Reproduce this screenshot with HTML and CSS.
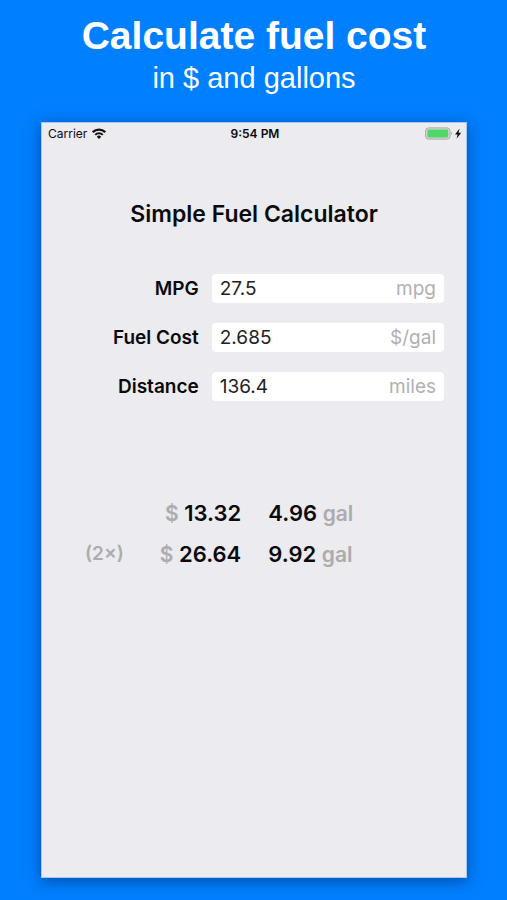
FILE: index.html
```
<!DOCTYPE html>
<html lang="en">
<head>
  <meta charset="UTF-8" />
  <meta name="viewport" content="width=device-width, initial-scale=1.0"/>
  <title>Simple Fuel Calculator</title>
  <link rel="stylesheet" href="styles.css">
</head>
<body>
  <header class="promo">
    <h1>Calculate fuel cost</h1>
    <p>in $ and gallons</p>
  </header>

  <main class="phone">
    <!-- Status bar -->
    <div class="status-bar">
      <div class="carrier">
        Carrier
        <svg class="wifi" viewBox="0 0 14 11" width="14" height="11" aria-hidden="true">
          <path d="M0.8 4.2a8.8 8.8 0 0 1 12.4 0" fill="none" stroke="#111" stroke-width="2.3"/>
          <path d="M3.2 6.9a5.4 5.4 0 0 1 7.6 0" fill="none" stroke="#111" stroke-width="2"/>
          <path d="M4.8 8.7a3.1 3.1 0 0 1 4.4 0L7 11z" fill="#111"/>
        </svg>
      </div>
      <div class="time">9:54 PM</div>
      <div class="battery">
        <svg viewBox="0 0 37 13" width="37" height="13" aria-hidden="true">
          <rect x="0.6" y="0.9" width="24.4" height="11.2" rx="3" fill="#d5d6d9" stroke="#a9aaad" stroke-width="1"/>
          <rect x="2.4" y="2.5" width="20.8" height="8" rx="1.4" fill="#4fd865"/>
          <path d="M26 4.8c1.2.5 1.2 2.9 0 3.4z" fill="#a9aaad"/>
          <path d="M34.6 1.4l-4.6 6h2.6l-1 4.4 4.6-6h-2.7z" fill="#111"/>
        </svg>
      </div>
    </div>

    <h2>Simple Fuel Calculator</h2>

    <form class="fields">
      <label for="mpg">MPG</label>
      <div class="field">
        <input type="text" id="mpg" inputmode="decimal" value="27.5">
        <span class="unit">mpg</span>
      </div>
      <label for="cost">Fuel Cost</label>
      <div class="field">
        <input type="text" id="cost" inputmode="decimal" value="2.685">
        <span class="unit">$/gal</span>
      </div>
      <label for="distance">Distance</label>
      <div class="field">
        <input type="text" id="distance" inputmode="decimal" value="136.4">
        <span class="unit">miles</span>
      </div>
    </form>

    <!-- One way, then round trip -->
    <table class="results">
      <tr>
        <td class="trip"></td>
        <td class="price"><span>$</span> 13.32</td>
        <td class="volume">4.96 <span>gal</span></td>
      </tr>
      <tr>
        <td class="trip">(2×)</td>
        <td class="price"><span>$</span> 26.64</td>
        <td class="volume">9.92 <span>gal</span></td>
      </tr>
    </table>
  </main>
</body>
</html>
```
FILE: styles.css
```
* {
  box-sizing: border-box;
}
body {
  margin: 0;
  min-height: 100vh;
  padding: 12px 40px 22px 41px;
  display: flex;
  flex-direction: column;
  background: #007fff;
  font-family: Inter, "Liberation Sans", sans-serif;
  color: #0a0a0c;
}
.promo {
  height: 110px;
  color: #fff;
  text-align: center;
  font-family: "Liberation Sans", Arial, sans-serif;
}
.promo h1 {
  margin: 0;
  font-size: 39px;
  line-height: 48px;
}
.promo p {
  margin: 0;
  font-size: 29px;
  line-height: 36px;
}
.phone {
  flex: 1;
  background: #ebebf0;
  border: 1px solid #a5c8ee;
  box-shadow: 0 3px 14px rgba(0, 30, 80, 0.5);
}
.status-bar {
  display: grid;
  grid-template-columns: 1fr auto 1fr;
  align-items: center;
  height: 20px;
  padding: 0 4px 0 6px;
  font-size: 12px;
}
.carrier {
  display: flex;
  align-items: center;
  gap: 5px;
}
.time {
  font-weight: 600;
}
.battery {
  display: flex;
  justify-content: flex-end;
}
h2 {
  margin: 56px 0 0;
  text-align: center;
  font-size: 23px;
  line-height: 30px;
  font-weight: 600;
}
.fields {
  display: grid;
  grid-template-columns: 39% minmax(0, 1fr);
  column-gap: 13px;
  row-gap: 20px;
  align-items: center;
  margin-top: 45px;
  padding-right: 22px;
}
.fields label {
  text-align: right;
  font-size: 19px;
  font-weight: 600;
}
.field {
  display: flex;
  align-items: center;
  height: 29px;
  padding: 0 8px;
  background: #fff;
  border-radius: 4px;
  font-size: 19px;
}
.field input {
  flex: 1;
  min-width: 0;
  padding: 0;
  border: 0;
  outline: 0;
  background: none;
  color: #222;
  font: inherit;
}
.unit {
  color: #b0b0b2;
}
.results {
  width: 100%;
  margin-top: 91px;
  border-collapse: collapse;
  table-layout: fixed;
  font-size: 22px;
  font-weight: 600;
}
.results td {
  height: 41px;
  padding: 0;
}
.results span,
.results .trip {
  color: #acacae;
}
.results span {
  font-size: 21px;
}
.results .trip {
  width: 24%;
  padding-left: 43px;
  font-size: 19px;
}
.results .price {
  width: 23%;
  text-align: right;
}
.results .volume {
  padding-left: 27px;
}
```
